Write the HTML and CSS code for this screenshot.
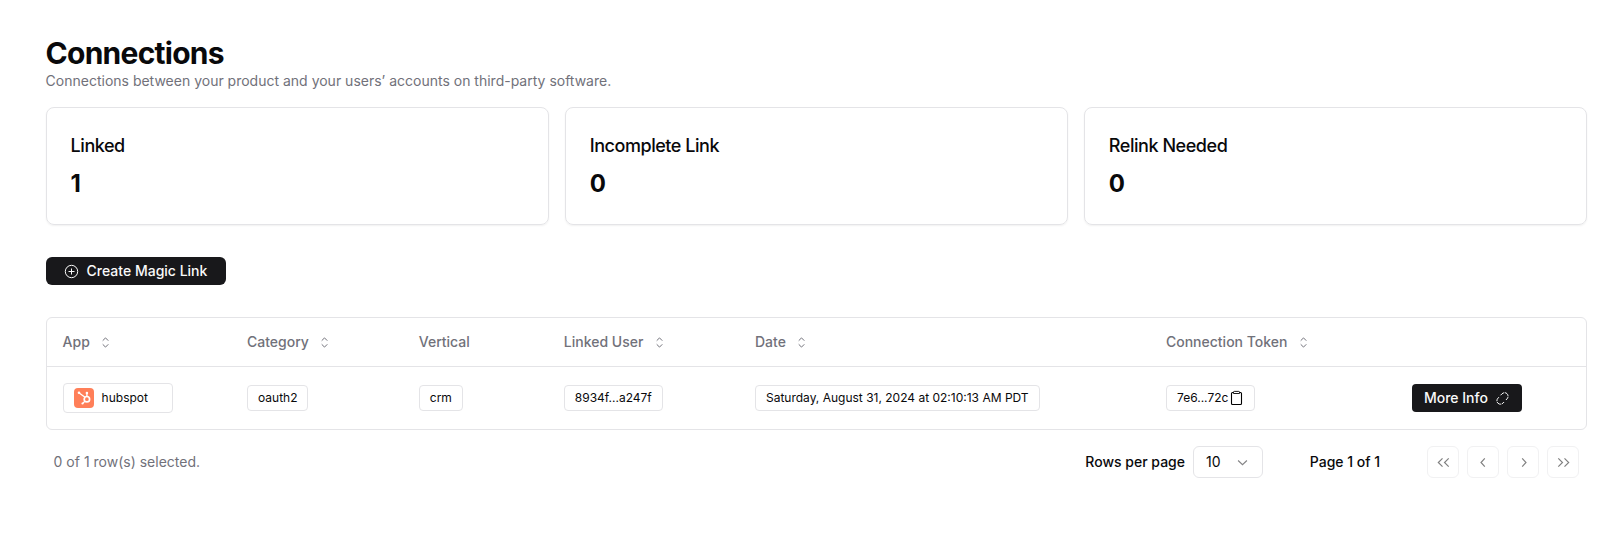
FILE: index.html
```html
<!DOCTYPE html>
<html lang="en">
<head>
<meta charset="utf-8">
<title>Connections</title>
<link rel="stylesheet" href="styles.css">
</head>
<body>
<svg class="defs" aria-hidden="true">
  <symbol id="sort" viewBox="0 0 15 15"><path d="M4.700 5.700 7.500 2.900l2.800 2.800M4.700 9.300l2.800 2.800 2.800-2.800"/></symbol>
  <symbol id="chev-left" viewBox="0 0 15 15"><path d="M8.800 3.300 5 7.500l3.800 4.200"/></symbol>
  <symbol id="chev-right" viewBox="0 0 15 15"><path d="M6.200 3.300l3.800 4.200-3.800 4.200"/></symbol>
  <symbol id="dbl-left" viewBox="0 0 15 15"><path d="M6.500 3.300l-4.200 4.200 4.200 4.200M12.700 3.300l-4.200 4.200 4.200 4.200"/></symbol>
  <symbol id="dbl-right" viewBox="0 0 15 15"><path d="M2.300 3.300l4.200 4.200-4.200 4.200M8.500 3.300l4.200 4.200-4.200 4.200"/></symbol>
</svg>
<main class="page">
  <header>
    <h1 class="title">Connections</h1>
    <p class="subtitle">Connections between your product and your users’ accounts on third-party software.</p>
  </header>

  <section class="cards">
    <article class="card"><h2 class="card-title">Linked</h2><p class="card-value">1</p></article>
    <article class="card"><h2 class="card-title">Incomplete Link</h2><p class="card-value">0</p></article>
    <article class="card"><h2 class="card-title">Relink Needed</h2><p class="card-value">0</p></article>
  </section>

  <button class="btn create">
    <svg class="icon" viewBox="0 0 15 15"><circle cx="7.500" cy="7.500" r="6.200"/><path d="M7.500 4.500v6M4.500 7.500h6"/></svg>
    <span>Create Magic Link</span>
  </button>

  <section class="table">
    <div class="row head">
      <div class="cell">App<svg class="icon sort"><use href="#sort"/></svg></div>
      <div class="cell">Category<svg class="icon sort"><use href="#sort"/></svg></div>
      <div class="cell">Vertical</div>
      <div class="cell">Linked User<svg class="icon sort"><use href="#sort"/></svg></div>
      <div class="cell">Date<svg class="icon sort"><use href="#sort"/></svg></div>
      <div class="cell">Connection Token<svg class="icon sort"><use href="#sort"/></svg></div>
      <div class="cell"></div>
    </div>
    <div class="row body">
      <div class="cell">
        <span class="badge app">
          <svg class="logo" viewBox="0 0 20 20">
            <rect width="20" height="20" rx="4" fill="#ff7f59"/>
            <g fill="none" stroke="#fff">
              <circle cx="12.900" cy="11.200" r="2.700" stroke-width="1.700"/>
              <path d="M12.900 8.500V5.400M11 9.200 5.200 4.900M11 13.100 8.800 15.300" stroke-width="1.300"/>
            </g>
            <g fill="#fff"><circle cx="12.900" cy="5" r="1.300"/><circle cx="5" cy="4.700" r="1.300"/><circle cx="8.500" cy="15.500" r="1.100"/></g>
          </svg>
          <span>hubspot</span>
        </span>
      </div>
      <div class="cell"><span class="badge">oauth2</span></div>
      <div class="cell"><span class="badge">crm</span></div>
      <div class="cell"><span class="badge">8934f...a247f</span></div>
      <div class="cell"><span class="badge">Saturday, August 31, 2024 at 02:10:13 AM PDT</span></div>
      <div class="cell"><span class="badge token">7e6...72c<svg class="clip" viewBox="0 0 15 16"><rect x="2.500" y="2.500" width="10" height="12" rx="1"/><path d="M4.500 3.500V2.200a.8.8 0 0 1 .8-.8h4.400a.8.8 0 0 1 .8.8V3.500z" fill="#fff" stroke-width=".9"/></svg></span></div>
      <div class="cell">
        <button class="btn more"><span>More Info</span><svg class="icon" viewBox="0 0 15 15"><path d="M5.500 4.300 6.900 2.900C8.700 1.300 10.600 1.300 12 2.700S13.500 6.200 12 7.900L10.900 9" stroke-dasharray="4.600 .8"/><path d="M3.900 6.200 3 7.100C1.500 8.800 1.500 10.900 2.900 12.200S6.500 13.600 8 12.100L9.100 11" stroke-dasharray="4.600 .8"/></svg></button>
      </div>
    </div>
  </section>

  <footer class="pager">
    <span class="selected">0 of 1 row(s) selected.</span>
    <span class="rows-label">Rows per page</span>
    <div class="select"><span>10</span><svg class="icon" viewBox="0 0 15 15"><path d="M3.100 5.500l4.400 4.200 4.400-4.200"/></svg></div>
    <span class="page-count">Page 1 of 1</span>
    <nav class="nav">
      <button class="nav-btn"><svg class="icon"><use href="#dbl-left"/></svg></button>
      <button class="nav-btn"><svg class="icon"><use href="#chev-left"/></svg></button>
      <button class="nav-btn"><svg class="icon"><use href="#chev-right"/></svg></button>
      <button class="nav-btn"><svg class="icon"><use href="#dbl-right"/></svg></button>
    </nav>
  </footer>
</main>
</body>
</html>
```
FILE: styles.css
```css
* { box-sizing: border-box; margin: 0; padding: 0; }
body { background: #fff; color: #09090b; font: 14px/20px Inter, sans-serif; }
button { font: inherit; }
.defs { display: none; }
.page { padding: 35px 27px 0 45.6px; }
.title { font-size: 30px; line-height: 36px; font-weight: 700; letter-spacing: -0.75px; }
.subtitle { color: #71717a; white-space: nowrap; }
.icon { width: 15px; height: 15px; flex: none; fill: none; stroke: currentColor; stroke-width: 1; }

.cards { display: grid; grid-template-columns: repeat(3, 1fr); gap: 16px; margin-top: 16px; }
.card { height: 118px; padding: 26px 24px 0; border: 1px solid #e4e4e7; border-radius: 8px; box-shadow: 0 1px 2px rgba(0, 0, 0, .06); }
.card-title { font-size: 18px; line-height: 24px; font-weight: 500; letter-spacing: -0.45px; }
.card-value { margin-top: 10px; font-size: 24px; line-height: 32px; font-weight: 700; }

.btn { display: flex; align-items: center; height: 28px; border: 0; background: #18181b; color: #fafafa; font-weight: 500; white-space: nowrap; }
.create { width: 180px; margin-top: 32px; padding-left: 18px; gap: 8px; border-radius: 6px; }
.more { width: 110px; padding-left: 12px; gap: 7.5px; border-radius: 4px; }

.table { margin-top: 32px; border: 1px solid #e4e4e7; border-radius: 6px; }
.row { display: grid; grid-template-columns: 184.4px 171.8px 145px 191.200px 411px 246px 1fr; }
.head { height: 49px; border-bottom: 1px solid #e4e4e7; color: #71717a; font-weight: 500; }
.body { height: 62px; }
.cell { display: flex; align-items: center; padding-left: 16px; white-space: nowrap; }
.sort { margin-left: 8.5px; }
.badge { display: flex; align-items: center; height: 26px; padding: 0 10px; border: 1px solid #e4e4e7; border-radius: 4px; font-size: 12px; line-height: 16px; }
.app { width: 110px; height: 30px; gap: 8px; }
.logo { width: 20px; height: 20px; }
.clip { width: 15px; height: 16px; margin: -1px 0 0 1px; fill: none; stroke: #000; stroke-width: 1.1; }

.pager { display: flex; align-items: center; margin-top: 16px; padding: 0 8px; font-weight: 500; }
.selected { color: #71717a; font-weight: 400; margin-right: auto; }
.select { display: flex; align-items: center; justify-content: space-between; width: 70px; height: 32px; margin-left: 8px; padding: 0 12px; border: 1px solid #e4e4e7; border-radius: 6px; font-weight: 400; }
.select .icon { color: #848486; stroke-width: 1.150; }
.page-count { width: 100px; margin: 0 32px; text-align: center; }
.nav { display: flex; gap: 8px; }
.nav-btn { display: flex; align-items: center; justify-content: center; width: 32px; height: 32px; border: 1px solid #e4e4e7; border-radius: 6px; background: #fff; color: #000; opacity: .5; }
.nav-btn .icon { stroke-width: 1.150; }
```
